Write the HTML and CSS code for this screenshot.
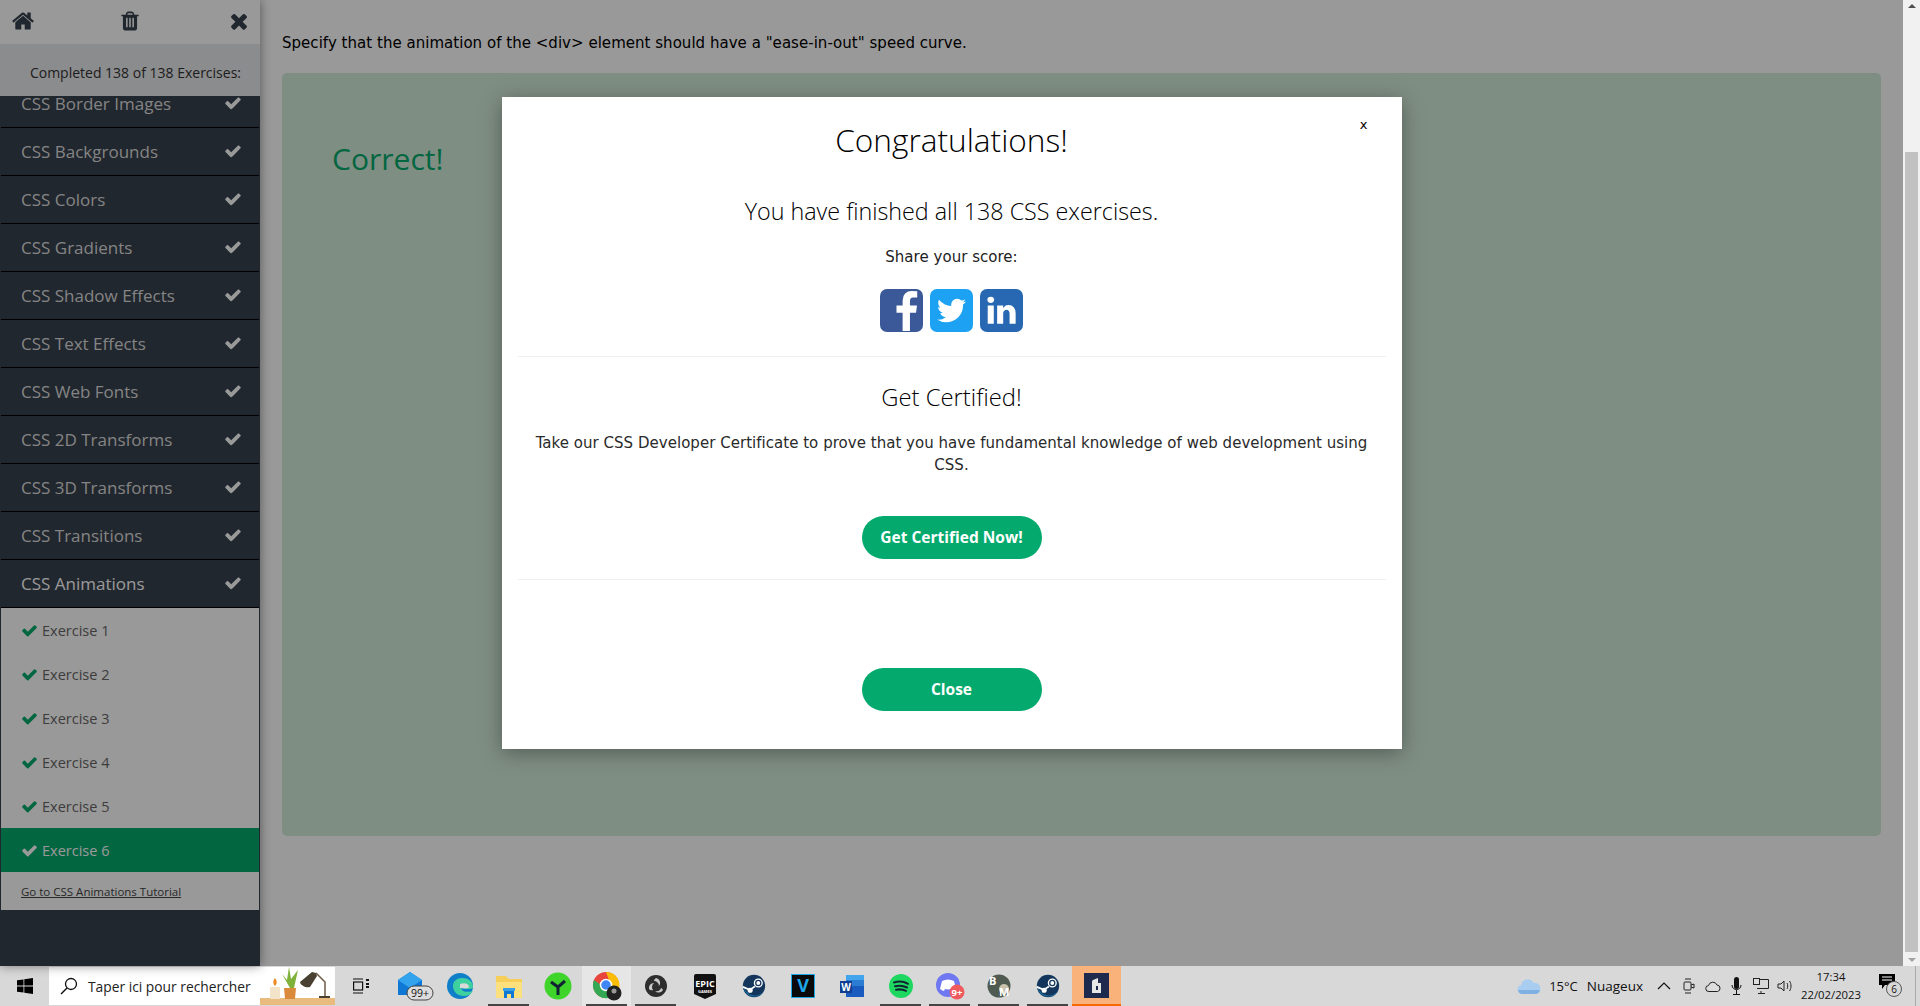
FILE: index.html
```html
<!DOCTYPE html>
<html lang="en">

<head>
    <meta charset="UTF-8">
    <title>CSS Exercises</title>
    <link rel="stylesheet" href="styles.css">
</head>

<body>
    <svg class="sprites" width="0" height="0">
        <symbol id="check" viewBox="0 0 1792 1792"><path d="M1671 566q0 40-28 68l-724 724-136 136q-28 28-68 28t-68-28l-136-136-362-362q-28-28-28-68t28-68l136-136q28-28 68-28t68 28l294 295 656-657q28-28 68-28t68 28l136 136q28 28 28 68z"/></symbol>
        <symbol id="home" viewBox="0 0 1792 1792"><path d="M1472 992v480q0 26-19 45t-45 19h-384v-384h-256v384h-384q-26 0-45-19t-19-45v-480q0-1 .5-3t.5-3l575-474 575 474q1 2 1 6zm223-69l-62 74q-8 9-21 11h-3q-13 0-21-7l-692-577-692 577q-12 8-24 7-13-2-21-11l-62-74q-8-10-7-23.5t11-21.5l719-599q32-26 76-26t76 26l244 204v-195q0-14 9-23t23-9h192q14 0 23 9t9 23v408l219 182q10 8 11 21.5t-7 23.5z"/></symbol>
        <symbol id="trash" viewBox="0 0 1792 1792"><path d="M704 1376v-704q0-14-9-23t-23-9h-64q-14 0-23 9t-9 23v704q0 14 9 23t23 9h64q14 0 23-9t9-23zm256 0v-704q0-14-9-23t-23-9h-64q-14 0-23 9t-9 23v704q0 14 9 23t23 9h64q14 0 23-9t9-23zm256 0v-704q0-14-9-23t-23-9h-64q-14 0-23 9t-9 23v704q0 14 9 23t23 9h64q14 0 23-9t9-23zm-544-992h448l-48-117q-7-9-17-11h-317q-10 2-17 11zm928 32v64q0 14-9 23t-23 9h-96v948q0 83-47 143.5t-113 60.5h-832q-66 0-113-58.5t-47-141.5v-952h-96q-14 0-23-9t-9-23v-64q0-14 9-23t23-9h309l70-167q15-37 54-63t79-26h320q40 0 79 26t54 63l70 167h309q14 0 23 9t9 23z"/></symbol>
        <symbol id="times" viewBox="0 0 1792 1792"><path d="M1490 1322q0 40-28 68l-136 136q-28 28-68 28t-68-28l-294-294-294 294q-28 28-68 28t-68-28l-136-136q-28-28-28-68t28-68l294-294-294-294q-28-28-28-68t28-68l136-136q28-28 68-28t68 28l294 294 294-294q28-28 68-28t68 28l136 136q28 28 28 68t-28 68l-294 294 294 294q28 28 28 68z"/></symbol>
        <symbol id="steam" viewBox="0 0 28 28">
            <circle cx="14" cy="14" r="13" fill="#14365c"/>
            <path d="M2 17.5a13 13 0 0 0 24 1.500a13 13 0 0 1-24-7z" fill="#1a6a9c"/>
            <circle cx="19" cy="10.500" r="4.500" fill="none" stroke="#fff" stroke-width="1.600"/>
            <circle cx="19" cy="10.500" r="2.200" fill="#fff"/>
            <path d="M1 15l8 3.500 6-4" fill="none" stroke="#fff" stroke-width="2"/>
            <circle cx="9.500" cy="19" r="3" fill="#fff"/>
        </symbol>
    </svg>

    <div class="browser">
        <div class="viewport">
            <aside class="sidebar">
                <div class="sidebar-tools">
                    <svg class="tool tool-home"><use href="#home"/></svg>
                    <svg class="tool tool-trash"><use href="#trash"/></svg>
                    <svg class="tool tool-home"><use href="#times"/></svg>
                </div>
                <div class="completed">Completed 138 of 138 Exercises:</div>
                <nav class="chapters">
                    <ul class="chapter-list">
                        <li class="chapter">CSS Border Images <svg class="chapter-check"><use href="#check"/></svg></li>
                        <li class="chapter">CSS Backgrounds <svg class="chapter-check"><use href="#check"/></svg></li>
                        <li class="chapter">CSS Colors <svg class="chapter-check"><use href="#check"/></svg></li>
                        <li class="chapter">CSS Gradients <svg class="chapter-check"><use href="#check"/></svg></li>
                        <li class="chapter">CSS Shadow Effects <svg class="chapter-check"><use href="#check"/></svg></li>
                        <li class="chapter">CSS Text Effects <svg class="chapter-check"><use href="#check"/></svg></li>
                        <li class="chapter">CSS Web Fonts <svg class="chapter-check"><use href="#check"/></svg></li>
                        <li class="chapter">CSS 2D Transforms <svg class="chapter-check"><use href="#check"/></svg></li>
                        <li class="chapter">CSS 3D Transforms <svg class="chapter-check"><use href="#check"/></svg></li>
                        <li class="chapter">CSS Transitions <svg class="chapter-check"><use href="#check"/></svg></li>
                        <li class="chapter chapter-open">CSS Animations <svg class="chapter-check"><use href="#check"/></svg></li>
                    </ul>
                    <ul class="exercises">
                        <li class="exercise"><svg class="exercise-check"><use href="#check"/></svg>Exercise 1</li>
                        <li class="exercise"><svg class="exercise-check"><use href="#check"/></svg>Exercise 2</li>
                        <li class="exercise"><svg class="exercise-check"><use href="#check"/></svg>Exercise 3</li>
                        <li class="exercise"><svg class="exercise-check"><use href="#check"/></svg>Exercise 4</li>
                        <li class="exercise"><svg class="exercise-check"><use href="#check"/></svg>Exercise 5</li>
                        <li class="exercise exercise-active"><svg class="exercise-check"><use href="#check"/></svg>Exercise 6</li>
                        <li class="tutorial"><a href="#">Go to CSS Animations Tutorial</a></li>
                    </ul>
                </nav>
            </aside>

            <main class="content">
                <p class="task">Specify that the animation of the &lt;div&gt; element should have a "ease-in-out" speed curve.</p>
                <div class="answer">
                    <h2 class="answer-title">Correct!</h2>
                </div>
            </main>

            <div class="overlay">
                <div class="modal">
                    <span class="modal-close">x</span>
                    <h2 class="modal-title">Congratulations!</h2>
                    <p class="modal-lead">You have finished all 138 CSS exercises.</p>
                    <p class="modal-share">Share your score:</p>
                    <div class="share-icons">
                        <svg class="share-icon share-fb" viewBox="0 0 43 43"><svg x="5" y="2" width="43" height="43" viewBox="0 0 1792 1792"><path d="M1343 12v264h-157q-86 0-116 36t-30 108v189h293l-39 296h-254v759h-306v-759h-255v-296h255v-218q0-186 104-288.5t277-102.5q147 0 228 12z"/></svg></svg>
                        <svg class="share-icon share-tw" viewBox="0 0 43 43"><svg x="5" y="5" width="33" height="33" viewBox="0 0 1792 1792"><path d="M1684 408q-67 98-162 167 1 14 1 42 0 130-38 259.5t-115.5 248.5-184.5 210.5-258 146-323 54.5q-271 0-496-145 35 4 78 4 225 0 401-138-105-2-188-64.5t-114-159.5q33 5 61 5 43 0 85-11-112-23-185.5-111.5t-73.5-205.5v-4q68 38 146 41-66-44-105-115t-39-154q0-88 44-163 121 149 294.5 238.5t371.5 99.5q-8-38-8-74 0-134 94.5-228.5t228.5-94.5q140 0 236 102 109-21 205-78-37 115-142 178 91-10 186-49z"/></svg></svg>
                        <svg class="share-icon share-in" viewBox="0 0 43 43"><svg x="5" y="5" width="33" height="33" viewBox="0 0 1792 1792"><path d="M477 625v991h-330v-991h330zm21-306q1 73-50.500 122t-135.500 49h-2q-82 0-132-49t-50-122q0-74 51.500-122.500t134.500-48.500 133 48.500 51 122.500zm1166 729v568h-329v-530q0-105-40.500-164.500t-126.500-59.500q-63 0-105.500 34.500t-63.500 85.500q-11 30-11 81v553h-329q2-399 2-647t-1-296l-1-48h329v144h-2q20-32 41-56t56.500-52 87-43.500 114.500-15.500q171 0 275 113.500t104 332.500z"/></svg></svg>
                    </div>
                    <hr class="modal-rule">
                    <h3 class="modal-subtitle">Get Certified!</h3>
                    <p class="modal-text">Take our CSS Developer Certificate to prove that you have fundamental knowledge of web development using CSS.</p>
                    <a class="modal-button" href="#">Get Certified Now!</a>
                    <hr class="modal-rule modal-rule-low">
                    <a class="modal-button modal-button-close" href="#">Close</a>
                </div>
            </div>
        </div>

        <div class="scrollbar">
            <span class="scroll-arrow scroll-up"></span>
            <span class="scroll-thumb"></span>
            <span class="scroll-arrow scroll-down"></span>
        </div>
    </div>

    <footer class="taskbar">
        <div class="start">
            <svg width="16" height="16" viewBox="0 0 16 16"><path d="M0 2.300l6.500-.9v6.200H0zM7.300 1.300L16 0v7.600H7.300zM0 8.400h6.500v6.200L0 13.700zM7.300 8.400H16V16l-8.700-1.300z" fill="#000"/></svg>
        </div>
        <div class="search">
            <svg class="search-icon" width="18" height="18" viewBox="0 0 18 18"><circle cx="11" cy="7" r="5.500" fill="none" stroke="#111" stroke-width="1.300"/><path d="M7 11l-6 6" stroke="#111" stroke-width="1.500"/></svg>
            <span class="search-text">Taper ici pour rechercher</span>
            <svg class="search-art" width="75" height="38" viewBox="0 0 75 38">
                <rect x="0" y="31" width="75" height="7" fill="#e9bb7f"/>
                <rect x="10" y="20" width="10" height="12" rx="1" fill="#f3e3c8"/>
                <path d="M15 11c2 3 2.500 5 0 8-2.500-3-2-5 0-8z" fill="#f08a24"/>
                <path d="M24 21h12l-1 11H25z" fill="#d98a3d"/>
                <path d="M30 21L22 7l5 6 2-13 2 12 7-9-4 18z" fill="#7fb23a"/>
                <path d="M40 15l12-10 4 1 1 3-7 11c-4 1-9-1-10-5z" fill="#4a4032"/>
                <path d="M56 6l9 9v15" fill="none" stroke="#6e5a44" stroke-width="1.500"/>
                <rect x="59" y="29" width="11" height="2" fill="#4a4032"/>
            </svg>
        </div>
        <div class="taskview">
            <svg width="17" height="16" viewBox="0 0 17 16" fill="none" stroke="#111" stroke-width="1.200"><path d="M1 1h10M1 15h10"/><rect x="1.600" y="4" width="9" height="8"/><path d="M14 2h3M14 6h3M14 9h3" stroke-width="2"/></svg>
        </div>

        <div class="apps">
            <div class="app">
                <svg class="app-mail" width="36" height="30" viewBox="0 0 36 30"><path d="M0 9l12-8 12 8v15H0z" fill="#0f78d4"/><path d="M0 9l12 8 12-8-12-8z" fill="#33a3ee"/><rect x="9" y="15" width="26" height="14" rx="7" fill="#ddd" stroke="#444"/><text class="badge-text" x="22" y="26">99+</text></svg>
            </div>
            <div class="app">
                <svg width="28" height="28" viewBox="0 0 28 28"><circle cx="14" cy="14" r="13" fill="#0f7fc9"/><path d="M27 15c0-6-5-9-11-9-5 0-9 3-9 8 0 6 5 10 11 10 4 0 7-2 9-5-3 1-11 2-12-3 4 1 12 2 12-1z" fill="#3fd0a0"/><path d="M14 12c5-2 9 0 9 3 0 1-3 2-9 1z" fill="#d9d9d9"/></svg>
            </div>
            <div class="app app-running">
                <svg width="28" height="26" viewBox="0 0 28 26"><path d="M1 3h10l3 3h13v19H1z" fill="#f6cf5a"/><path d="M1 9h26v16H1z" fill="#fbe07d"/><path d="M9 25v-7h10v7h-3v-4h-4v4z" fill="#0f78d4"/><path d="M8 15h12v3H8z" fill="#35a0e8"/></svg>
            </div>
            <div class="app">
                <svg width="28" height="28" viewBox="0 0 28 28"><circle cx="14" cy="14" r="13.500" fill="#3ed42a"/><path d="M14 15L7 10M14 15l7-6M14 15v8" stroke="#123" stroke-width="3"/></svg>
            </div>
            <div class="app app-running app-active">
                <svg width="30" height="30" viewBox="0 0 30 30"><circle cx="14" cy="14" r="13" fill="#e8453c"/><path d="M14 14L26 20A13 13 0 0 1 9 26z" fill="#34a853"/><path d="M14 1a13 13 0 0 1 12 19l-7-6z" fill="#fbbc05"/><path d="M2 9a13 13 0 0 0 10 18l4-8z" fill="#34a853"/><circle cx="14" cy="14" r="5.500" fill="#4285f4" stroke="#fff" stroke-width="1.500"/><circle cx="22" cy="22" r="7.500" fill="#222"/><circle cx="22" cy="20" r="2.500" fill="#999"/></svg>
            </div>
            <div class="app app-running">
                <svg width="22" height="22" viewBox="0 0 22 22"><circle cx="11" cy="11" r="11" fill="#2e2e2e"/><path d="M11 3a5 5 0 0 1 3 8 5 5 0 0 0-5-5 4 4 0 0 1 2-3zM4 14a5 5 0 0 1 5-6 5 5 0 0 0-1 7 4 4 0 0 1-4-1zM18 15a5 5 0 0 1-8 1 5 5 0 0 0 6-3 4 4 0 0 1 2 2z" fill="#c9c9c9"/></svg>
            </div>
            <div class="app">
                <svg width="22" height="25" viewBox="0 0 22 25"><path d="M2 0h18a2 2 0 0 1 2 2v18l-11 5-11-5V2a2 2 0 0 1 2-2z" fill="#111"/><text class="epic-text" x="11" y="13">EPIC</text><text class="epic-small" x="11" y="19">GAMES</text></svg>
            </div>
            <div class="app">
                <svg width="24" height="24"><use href="#steam"/></svg>
            </div>
            <div class="app">
                <svg width="24" height="24" viewBox="0 0 24 24"><rect x="0.500" y="0.500" width="23" height="23" fill="#0a0a0a" stroke="#1fa7e8"/><text class="vegas-text" x="12" y="18">V</text></svg>
            </div>
            <div class="app">
                <svg width="24" height="22" viewBox="0 0 24 22"><rect x="6" y="0" width="18" height="22" fill="#185abd"/><rect x="6" y="0" width="18" height="5" fill="#41a5ee"/><rect x="6" y="5" width="18" height="6" fill="#2b7cd3"/><rect x="0" y="6" width="12" height="12" fill="#103f91"/><text class="word-text" x="6" y="16">W</text></svg>
            </div>
            <div class="app app-running">
                <svg width="24" height="24" viewBox="0 0 24 24"><circle cx="12" cy="12" r="12" fill="#1ed760"/><path d="M5 8.500c5-1.500 10-1 14 1.300M6 12.300c4-1.100 8.500-.7 12 1.200M7 15.800c3.500-.8 7-.4 10 1" fill="none" stroke="#123" stroke-width="2" stroke-linecap="round"/></svg>
            </div>
            <div class="app app-running">
                <svg width="30" height="28" viewBox="0 0 30 28"><circle cx="13" cy="13" r="12" fill="#6f78f0"/><path d="M7 9c4-2 8-2 12 0l2 8c-2 1-3 2-4 2l-1-2c-2 .5-4 .5-6 0l-1 2c-1 0-2-1-4-2z" fill="#fff"/><circle cx="22" cy="20" r="7.500" fill="#ef5a5f"/><text class="discord-text" x="22" y="23.500">9+</text></svg>
            </div>
            <div class="app app-running">
                <svg width="24" height="24" viewBox="0 0 24 24"><circle cx="12" cy="12" r="11.500" fill="#4f5a50"/><circle cx="17" cy="15" r="5" fill="#c9c2ad"/><text class="bm-text" x="2" y="11">B</text><text class="bm-text" x="12" y="22">M</text></svg>
            </div>
            <div class="app app-running">
                <svg width="24" height="24"><use href="#steam"/></svg>
            </div>
            <div class="app app-game">
                <svg width="15" height="15" viewBox="0 0 15 15" class="game-logo"><path d="M4 2l5-2v5h3v10H3V3zM7 8v4h2V8z" fill="#e6e6e6" fill-rule="evenodd"/></svg>
            </div>
        </div>

        <div class="tray">
            <svg class="weather" width="24" height="15" viewBox="0 0 24 15"><path d="M5 15a4.500 4.500 0 0 1-.8-8.900A6.500 6.500 0 0 1 16.500 4 5.500 5.500 0 0 1 19 15z" fill="#a8cdf0"/><path d="M1 11h22a5 5 0 0 1-4 4H5a5 5 0 0 1-4-4z" fill="#7fb0e2"/></svg>
            <span class="tray-temp">15°C</span>
            <span class="tray-label">Nuageux</span>
            <svg class="tray-chevron" width="14" height="8" viewBox="0 0 14 8"><path d="M1 7l6-6 6 6" fill="none" stroke="#111" stroke-width="1.200"/></svg>
            <svg class="tray-icon tray-cam" width="12" height="18" viewBox="0 0 12 18" fill="none" stroke="#222"><rect x="1" y="5" width="7" height="8" rx="1"/><path d="M8 8l3-1v4l-3-1M2 2h6M2 16h6"/></svg>
            <svg class="tray-icon" width="16" height="11" viewBox="0 0 16 11"><path d="M4 10.500a3 3 0 0 1-.5-6A4.500 4.500 0 0 1 12 4a3.300 3.300 0 0 1 .5 6.500z" fill="#ddd" stroke="#222"/></svg>
            <svg class="tray-icon" width="11" height="18" viewBox="0 0 11 18"><rect x="3" y="0" width="5" height="12" rx="2.500" fill="#111"/><path d="M1 8c0 6 9 6 9 0M5.500 13v4M2 17.500h7" fill="none" stroke="#111"/></svg>
            <svg class="tray-icon tray-net" width="16" height="16" viewBox="0 0 16 16" fill="none" stroke="#222"><path d="M4 1.500h11.500v9H4M8 13v2.500M5 15.500h7"/><rect x="0.500" y="0.500" width="6" height="6" fill="#ddd"/></svg>
            <svg class="tray-icon tray-sound" width="16" height="14" viewBox="0 0 16 14" fill="none" stroke="#222"><path d="M1 5h3l3-3v10L4 9H1zM10 4c1 2 1 4 0 6M12.500 2c2 3 2 7 0 10"/></svg>
            <div class="clock">
                <span>17:34</span>
                <span>22/02/2023</span>
            </div>
            <div class="notify">
                <svg width="16" height="15" viewBox="0 0 16 15"><path d="M0 0h16v11H6l-3 4v-4H0z" fill="#000"/><path d="M3 3h10M3 6h10" stroke="#fff"/></svg>
                <span class="notify-count">6</span>
            </div>
            <span class="show-desktop"></span>
        </div>
    </footer>
</body>

</html>
```

FILE: styles.css
```css
* {
    box-sizing: border-box;
}

html,
body {
    margin: 0;
    padding: 0;
    height: 100%;
    overflow: hidden;
}

body {
    font-family: "DejaVu Sans", Verdana, sans-serif;
    font-size: 15px;
    letter-spacing: 0.03px;
    color: #000;
    background-color: #fff;
    display: flex;
    flex-direction: column;
}

.sprites {
    position: absolute;
}

.browser {
    display: flex;
    height: 966px;
}

.viewport {
    position: relative;
    flex: 1;
    display: flex;
    min-width: 0;
}

/* sidebar */
.sidebar {
    width: 260px;
    flex-shrink: 0;
    display: flex;
    flex-direction: column;
    background-color: #37414d;
    box-shadow: 0 0 10px rgba(0, 0, 0, 0.45);
    font-family: "Open Sans", sans-serif;
    letter-spacing: 0;
}

.sidebar-tools {
    height: 44px;
    flex-shrink: 0;
    display: flex;
    align-items: center;
    justify-content: space-between;
    padding: 0 9px 3px 11px;
    background-color: #fff;
    color: #37414d;
}

.tool {
    fill: currentColor;
}

.tool-home {
    width: 24px;
    height: 24px;
}

.tool-trash {
    width: 22px;
    height: 24px;
    margin-right: 2px;
}

.completed {
    height: 52px;
    flex-shrink: 0;
    padding-top: 20px;
    padding-right: 19px;
    text-align: right;
    background-color: #e8e9eb;
    color: #333;
    font-size: 14px;
    line-height: 18px;
    position: relative;
    z-index: 1;
}

.chapters {
    flex: 1;
    overflow: hidden;
    padding: 0 1px;
}

.chapter-list,
.exercises {
    list-style: none;
    margin: 0;
    padding: 0;
}

.chapter-list {
    margin-top: -16px;
}

.chapter {
    height: 48px;
    display: flex;
    align-items: center;
    justify-content: space-between;
    padding: 0 17px 0 20px;
    border-bottom: 1px solid #000;
    color: #dcdcdc;
    font-size: 17px;
}

.chapter-open {
    color: #fff;
}

.chapter-check {
    width: 18px;
    height: 18px;
    fill: #fff;
    margin-top: -2px;
}

.exercises {
    background-color: #fff;
}

.exercise {
    height: 44px;
    display: flex;
    align-items: center;
    padding-left: 20px;
    color: #666;
    font-size: 14.5px;
}

.exercise-check {
    width: 17px;
    height: 17px;
    margin-right: 4px;
    fill: #04aa6d;
}

.exercise-active {
    background-color: #04aa6d;
    color: #fff;
}

.exercise-active .exercise-check {
    fill: #fff;
}

.tutorial {
    height: 38px;
    padding: 12px 0 0 20px;
    font-size: 11.5px;
    line-height: 16px;
}

.tutorial a {
    color: #444;
}

/* main column */
.content {
    flex: 1;
    min-width: 0;
    padding: 0 22px;
}

.task {
    margin: 0;
    padding-top: 32px;
    line-height: 22px;
}

.answer {
    margin-top: 19px;
    height: 763px;
    padding: 50px;
    background-color: #d4edda;
    border-radius: 5px;
}

.answer-title {
    margin: 0;
    font-family: "Open Sans", sans-serif;
    font-size: 30px;
    font-weight: 400;
    line-height: 72px;
    color: #04aa6d;
}

/* dimmed layer and dialog */
.overlay {
    position: absolute;
    inset: 0;
    z-index: 2;
    display: flex;
    justify-content: center;
    align-items: flex-start;
    padding-top: 97px;
    background-color: rgba(0, 0, 0, 0.4);
}

.modal {
    position: relative;
    width: 900px;
    height: 652px;
    padding: 19px 16px 0;
    text-align: center;
    background-color: #fff;
    box-shadow: 0 4px 20px rgba(0, 0, 0, 0.35);
}

.modal-close {
    position: absolute;
    top: 18px;
    right: 34px;
    font-size: 13px;
    line-height: 20px;
}

.modal-title {
    margin: 0;
    font-family: "Open Sans", sans-serif;
    font-size: 31.6px;
    font-weight: 300;
    line-height: 48px;
    letter-spacing: 0;
}

.modal-lead {
    margin: 29px 0 0;
    font-family: "Open Sans", sans-serif;
    font-size: 23.3px;
    font-weight: 300;
    line-height: 36px;
    letter-spacing: 0;
}

.modal-share {
    margin: 17px 0 0;
    line-height: 22px;
    color: #222;
}

.share-icons {
    margin-top: 21px;
    display: flex;
    justify-content: center;
    gap: 7px;
    height: 43px;
}

.share-icon {
    width: 43px;
    height: 43px;
    border-radius: 7px;
    fill: #fff;
}

.share-fb {
    background-color: #3b5998;
}

.share-tw {
    background-color: #1da1f2;
}

.share-in {
    background-color: #2867b2;
}

.modal-rule {
    margin: 24px 0 0;
    height: 1px;
    border: 0;
    background-color: #eee;
}

.modal-rule-low {
    margin-top: 20px;
}

.modal-subtitle {
    margin: 22px 0 0;
    font-family: "Open Sans", sans-serif;
    font-size: 23.8px;
    font-weight: 300;
    line-height: 36px;
    letter-spacing: 0;
}

.modal-text {
    margin: 17px 0 0;
    padding: 0 16px;
    line-height: 22px;
    color: #2a2a2a;
}

.modal-button {
    display: block;
    width: 180px;
    height: 43px;
    margin: 40px auto 0;
    border-radius: 25px;
    background-color: #04aa6d;
    color: #fff;
    font-family: "Open Sans", sans-serif;
    font-size: 15.5px;
    font-weight: 700;
    line-height: 43px;
    letter-spacing: 0;
    text-decoration: none;
}

.modal-button-close {
    margin-top: 88px;
}

/* window scrollbar */
.scrollbar {
    width: 17px;
    flex-shrink: 0;
    display: flex;
    flex-direction: column;
    align-items: center;
    background-color: #f1f1f1;
}

.scroll-arrow {
    width: 0;
    height: 0;
    margin: 4px 0;
    border-left: 4px solid transparent;
    border-right: 4px solid transparent;
}

.scroll-up {
    border-bottom: 4px solid #505050;
}

.scroll-down {
    border-top: 4px solid #a3a3a3;
    margin-top: 6px;
}

.scroll-thumb {
    width: 13px;
    flex: 1;
    margin-top: 140px;
    background-color: #c1c1c1;
}

/* windows taskbar */
.taskbar {
    height: 40px;
    flex-shrink: 0;
    display: flex;
    align-items: stretch;
    background-color: #d8d8d8;
    font-family: "Open Sans", sans-serif;
    letter-spacing: 0;
    color: #111;
}

.start {
    width: 49px;
    display: flex;
    align-items: center;
    justify-content: center;
}

.search {
    width: 286px;
    margin: 1px 0;
    display: flex;
    align-items: center;
    background-color: #fff;
}

.search-icon {
    margin-left: 11px;
}

.search-text {
    margin-left: 10px;
    font-size: 13.8px;
    color: #222;
    white-space: nowrap;
}

.search-art {
    margin-left: auto;
    align-self: flex-end;
}

.taskview {
    width: 51px;
    display: flex;
    align-items: center;
    justify-content: center;
}

.apps {
    display: flex;
}

.app {
    width: 49px;
    display: flex;
    align-items: center;
    justify-content: center;
    position: relative;
}

.app-mail {
    margin-left: 10px;
    flex-shrink: 0;
}

.app-running::after {
    content: "";
    position: absolute;
    left: 4px;
    right: 4px;
    bottom: 0;
    height: 2px;
    background-color: #444;
}

.app-active {
    background-color: #e6e6e6;
}

.app-game {
    background-color: #f8b27a;
    border-bottom: 2px solid #f56a00;
}

.game-logo {
    padding: 0;
    background-color: #1d2a4d;
    outline: 5px solid #1d2a4d;
    outline-offset: 0;
}

.badge-text {
    font-size: 10.5px;
    text-anchor: middle;
    fill: #111;
}

.epic-text {
    font-size: 9px;
    font-weight: 700;
    text-anchor: middle;
    fill: #fff;
}

.epic-small {
    font-size: 4px;
    font-weight: 700;
    text-anchor: middle;
    fill: #fff;
}

.vegas-text {
    font-size: 18px;
    font-weight: 700;
    text-anchor: middle;
    fill: #1fa7e8;
}

.word-text {
    font-size: 10px;
    font-weight: 700;
    text-anchor: middle;
    fill: #fff;
}

.discord-text {
    font-size: 9.5px;
    font-weight: 700;
    text-anchor: middle;
    fill: #fff;
}

.bm-text {
    font-size: 11px;
    font-weight: 700;
    fill: #fff;
}

.tray {
    flex: 1;
    display: flex;
    align-items: center;
    justify-content: flex-end;
    font-size: 13px;
}

.tray-temp {
    margin-left: 8px;
}

.tray-label {
    margin-left: 9px;
    font-size: 13.5px;
}

.tray-chevron {
    margin-left: 14px;
}

.tray-icon {
    margin-left: 10px;
}

.tray-cam {
    margin-left: 12px;
}

.tray-net {
    margin-left: 11px;
}

.tray-sound {
    margin-left: 8px;
}

.clock {
    width: 58px;
    margin-left: 9px;
    display: flex;
    flex-direction: column;
    align-items: center;
    font-size: 11.3px;
    line-height: 18px;
}

.notify {
    position: relative;
    margin-left: 19px;
    width: 24px;
    height: 24px;
}

.notify-count {
    position: absolute;
    left: 7px;
    top: 7px;
    width: 16px;
    height: 16px;
    border: 1px solid #555;
    border-radius: 50%;
    background-color: #d8d8d8;
    font-size: 10px;
    line-height: 14px;
    text-align: center;
}

.show-desktop {
    width: 1px;
    height: 100%;
    margin-left: 12px;
    margin-right: 4px;
    background-color: #aaa;
}
```
